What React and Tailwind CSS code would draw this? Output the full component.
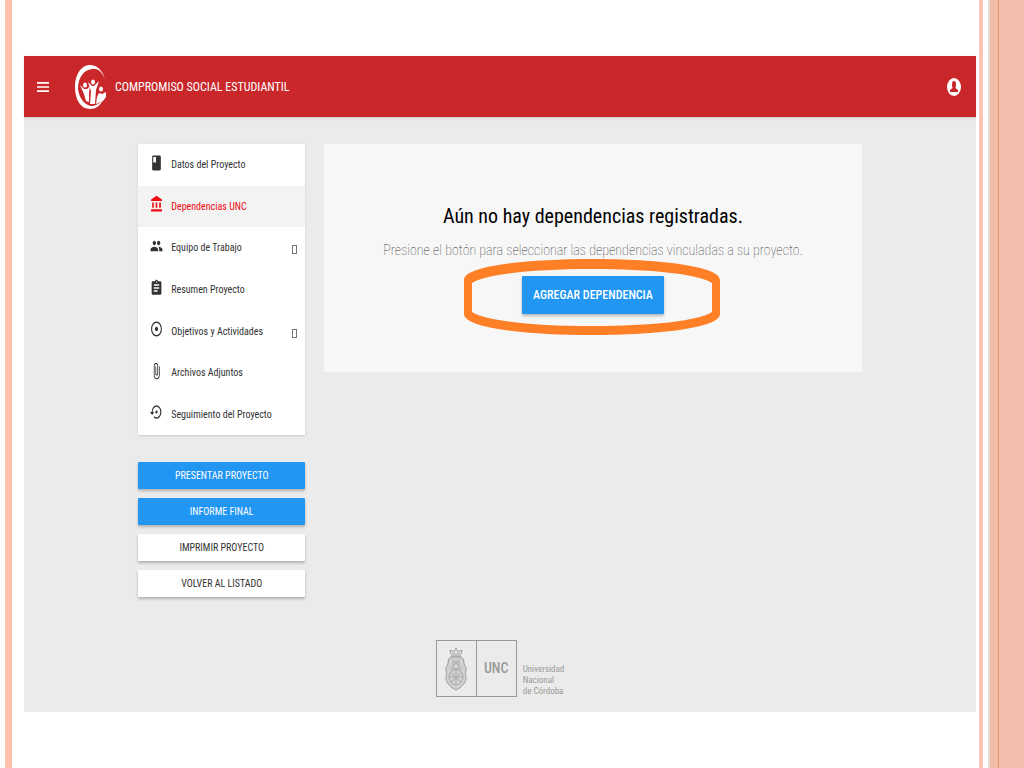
import { MdBook, MdAccountBalance, MdGroup, MdAssignment, MdAdjust, MdAttachFile, MdSettingsBackupRestore, MdMenu } from 'react-icons/md';

const menuItems = [
  { label: 'Datos del Proyecto', Icon: MdBook },
  { label: 'Dependencias UNC', Icon: MdAccountBalance, active: true },
  { label: 'Equipo de Trabajo', Icon: MdGroup, expandable: true },
  { label: 'Resumen Proyecto', Icon: MdAssignment },
  { label: 'Objetivos y Actividades', Icon: MdAdjust, expandable: true },
  { label: 'Archivos Adjuntos', Icon: MdAttachFile },
  { label: 'Seguimiento del Proyecto', Icon: MdSettingsBackupRestore }
];

const actions = [
  { label: 'PRESENTAR PROYECTO', primary: true },
  { label: 'INFORME FINAL', primary: true },
  { label: 'IMPRIMIR PROYECTO' },
  { label: 'VOLVER AL LISTADO' }
];

function Logo() {
  return (
    <svg viewBox="0 0 32 46" className="h-[46px] w-8" fill="#fff" aria-hidden="true">
      <path d="M30 15C27 5 21 1 15 1C6 1 0 11 0 23C0 36 6 45 15 45C21 45 25 42 28 36C24 40 20 42 16 42C9 41 4 33 3 25C3 13 9 6 17 5C23 4 27 8 30 15Z" />
      <ellipse cx="10" cy="21" rx="2" ry="2.500" />
      <ellipse cx="18" cy="18" rx="2" ry="2.500" />
      <ellipse cx="26" cy="25" rx="2" ry="2.500" />
      <path d="M5 21L9 25L12 25L15 22L14 29L14 38L11 37L9 30Z" />
      <path d="M13 18L17 22L19 22L24 17L21 26L20 40L15 40L16 27Z" />
      <path d="M22 33L24 29L27 30L31 28L31 33L28 37L21 40Z" />
    </svg>
  );
}

function AccountIcon() {
  return (
    <svg viewBox="0 0 14 20" className="h-5 w-[14px]" aria-hidden="true">
      <ellipse cx="7" cy="10" rx="7" ry="9" fill="#fff" />
      <ellipse cx="7" cy="7" rx="2" ry="3" fill="#ca272b" />
      <path d="M5 8H9L8.500 11L11 13V15H3V13L5.500 11Z" fill="#ca272b" />
    </svg>
  );
}

function Shield() {
  return (
    <svg viewBox="0 0 24 44" className="h-11 w-6" fill="none" stroke="#aaa" strokeWidth="1" aria-hidden="true">
      <path d="M7 7L6 3L10 5L12 1L14 5L18 3L17 7ZM7 9H17" stroke="#999" />
      <path d="M7 10C3 12 5 16 3 19C0 23 4 25 2 29C1 35 6 40 12 43C18 40 23 35 22 29C20 25 24 23 21 19C19 16 21 12 17 10Z" fill="#d2d2d2" stroke="#999" />
      <path d="M8 12L16 20M16 12L8 20M5 20L10 25M19 20L14 25M9 15H15V22H9Z" />
      <ellipse cx="12" cy="30" rx="7" ry="8" />
      <path d="M7 26L17 35M17 26L7 35M12 22V38M5 30H19" />
    </svg>
  );
}

function Sidebar() {
  return (
    <aside className="w-[167px] shrink-0">
      <nav className="flex h-[291px] flex-col bg-white shadow-sm">
        {menuItems.map(({ label, Icon, active, expandable }) => (
          <a
            key={label}
            href="#"
            className={`flex flex-1 items-center pr-2 pl-3 text-[10px] ${active ? 'bg-[#f3f3f3] text-[#f00a12]' : 'text-[#333]'}`}
          >
            <Icon preserveAspectRatio="none" className="mb-1 h-[18px] w-[13px] shrink-0" />
            <span className="ml-2 flex-1 whitespace-nowrap">{label}</span>
            {expandable && <span className="mt-1 h-[9px] w-[5px] border border-[#777]" />}
          </a>
        ))}
      </nav>
      <div className="mt-[27px] flex flex-col gap-[9px]">
        {actions.map(({ label, primary }) => (
          <button
            key={label}
            type="button"
            className={`h-[27px] rounded-[1px] text-[10px] shadow-[0_2px_3px_rgba(0,0,0,0.25)] ${primary ? 'bg-[#2196f3] text-white' : 'bg-white text-[#333]'}`}
          >
            {label}
          </button>
        ))}
      </div>
    </aside>
  );
}

function EmptyState() {
  return (
    <section className="flex h-[228px] min-w-0 flex-1 flex-col items-center bg-[#f7f7f7] pt-[58px] text-center">
      <h1 className="text-[20px] leading-7 text-black">Aún no hay dependencias registradas.</h1>
      <p className="mt-2 text-[14px] leading-6 font-thin whitespace-nowrap text-[#333]">
        Presione el botón para seleccionar las dependencias vinculadas a su proyecto.
      </p>
      <div className="relative mt-[14px]">
        <button type="button" className="h-[38px] w-[142px] rounded-[1px] bg-[#2196f3] text-[12px] font-medium text-white shadow-[0_2px_3px_rgba(0,0,0,0.25)]">
          AGREGAR DEPENDENCIA
        </button>
        {/* hand-drawn highlight around the button */}
        <svg viewBox="0 0 256 78" className="pointer-events-none absolute -top-[18px] -left-[58px] h-[78px] w-64 max-w-none" fill="#ff7f27" aria-hidden="true">
          <path
            fillRule="evenodd"
            d="M0 22C0 8 62 1 128 1S256 8 256 22V56C256 70 194 77 128 77S0 70 0 56ZM8 25V54C22 63 70 68 128 68S234 63 248 54V25C234 16 186 11 128 11S22 16 8 25Z"
          />
        </svg>
      </div>
    </section>
  );
}

export default function App() {
  return (
    <div className="flex min-h-screen bg-white font-['Roboto_Condensed','Roboto',sans-serif]">
      <div className="mr-3 ml-[5px] w-[7px] shrink-0 bg-[#ffc0ad]" />

      <div className="my-14 flex min-w-0 flex-1 flex-col bg-[#ebebeb]">
        <header className="flex h-[61px] items-center bg-[#ca272b] pr-[15px] pl-[11px] text-white shadow">
          <button type="button" aria-label="Menú">
            <MdMenu preserveAspectRatio="none" className="h-5 w-4" />
          </button>
          <span className="ml-6">
            <Logo />
          </span>
          <span className="ml-2 flex-1 text-[12px]">COMPROMISO SOCIAL ESTUDIANTIL</span>
          <button type="button" aria-label="Cuenta">
            <AccountIcon />
          </button>
        </header>

        <main className="mx-auto mt-[27px] flex w-[76%] items-start gap-[19px]">
          <Sidebar />
          <EmptyState />
        </main>

        <footer className="mt-auto flex items-end justify-center pt-8 pb-[15px] text-[#999]">
          <div className="flex h-[57px] w-[81px] border border-[#999]">
            <div className="flex flex-1 items-center justify-center border-r border-[#999]">
              <Shield />
            </div>
            <div className="flex flex-1 items-center justify-center text-[14px] font-medium">UNC</div>
          </div>
          <p className="ml-[6px] text-[9px] leading-[11px]">
            Universidad
            <br />
            Nacional
            <br />
            de Córdoba
          </p>
        </footer>
      </div>

      <div className="ml-[3px] flex w-[45px] shrink-0">
        <div className="w-1 bg-[#fbc5b5]" />
        <div className="ml-[5px] w-[2px] bg-[#e3ded5]" />
        <div className="w-2 bg-[#f1bda9]" />
        <div className="w-px bg-[#e8965f]" />
        <div className="w-[7px] bg-[#f4bdae]" />
        <div className="flex-1 bg-[#f2bfac]" />
      </div>
    </div>
  );
}
